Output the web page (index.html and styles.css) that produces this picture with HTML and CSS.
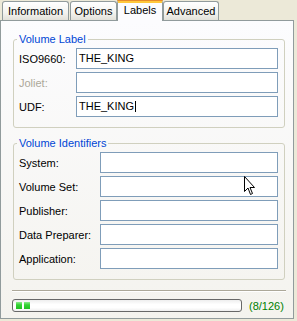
FILE: index.html
```html
<!DOCTYPE html>
<html>
<head>
<meta charset="utf-8">
<link rel="stylesheet" href="styles.css">
</head>
<body>
<div class="window">
  <div class="tabs">
    <div class="tab tab-info">Information</div>
    <div class="tab tab-options">Options</div>
    <div class="tab tab-labels selected">Labels</div>
    <div class="tab tab-adv">Advanced</div>
  </div>
  <div class="panel">
    <fieldset class="group group-label">
      <legend>Volume Label</legend>
      <div class="rows rows-label">
        <span class="lbl">ISO9660:</span><div class="field">THE_KING</div>
        <span class="lbl disabled">Joliet:</span><div class="field"></div>
        <span class="lbl">UDF:</span><div class="field">THE_KING<span class="caret"></span></div>
      </div>
    </fieldset>
    <fieldset class="group group-ids">
      <legend>Volume Identifiers</legend>
      <div class="rows rows-ids">
        <span class="lbl">System:</span><div class="field"></div>
        <span class="lbl">Volume Set:</span><div class="field"></div>
        <span class="lbl">Publisher:</span><div class="field"></div>
        <span class="lbl">Data Preparer:</span><div class="field"></div>
        <span class="lbl">Application:</span><div class="field"></div>
      </div>
    </fieldset>
    <div class="sep"></div>
    <div class="status">
      <div class="progress"><span class="block"></span><span class="block"></span></div>
      <span class="count">(8/126)</span>
    </div>
  </div>
  <svg class="pointer" width="13" height="21" viewBox="0 0 13 21">
    <path d="M0.5 0.5 L0.5 15.5 L4 12 L6.5 18.5 L8.5 17.5 L6 11.5 L10.5 11.5 Z" fill="#fff" stroke="#000" stroke-width="1"/>
  </svg>
</div>
</body>
</html>
```
FILE: styles.css
```css
* { box-sizing: border-box; }
html, body {
  margin: 0;
  padding: 0;
  background: #ECE9D8;
}
.window {
  position: relative;
  width: 297px;
  height: 321px;
  background: #ECE9D8;
  font-family: "Liberation Sans", Arial, sans-serif;
  font-size: 11px;
  color: #000;
}
.tabs {
  display: flex;
  align-items: flex-end;
  height: 21px;
  padding-left: 2px;
  position: relative;
  z-index: 2;
}
.tab {
  height: 19px;
  border: 1px solid #919B9C;
  border-bottom: none;
  border-radius: 3px 3px 0 0;
  background: linear-gradient(to bottom, #FFFFFF 0%, #F3F3EF 60%, #E2E1D9 100%);
  text-align: center;
  line-height: 17px;
  padding-top: 1px;
  margin-bottom: 1px;
}
.tab-info { width: 67px; margin-right: 1px; }
.tab-options { width: 47px; }
.tab-labels { width: 46px; }
.tab-adv { width: 56px; }
.tab.selected {
  height: 21px;
  margin-bottom: 0;
  background: #FCFCFE;
  border-top: 3px solid #FFC83C;
  border-radius: 2px 2px 0 0;
  line-height: 14px;
  padding-top: 0;
  position: relative;
}
.tab.selected::before {
  content: "";
  position: absolute;
  left: -1px;
  right: -1px;
  top: -3px;
  height: 1px;
  background: #E68B2C;
  border-radius: 2px 2px 0 0;
}
.panel {
  margin-top: -1px;
  width: 294px;
  height: 299px;
  border: 1px solid #919B9C;
  background: linear-gradient(to bottom, #FCFCFE 0%, #F4F3EE 100%);
  padding: 12px 7px 0 11px;
  position: relative;
  z-index: 1;
}
.group {
  margin: 0 1px;
  border: 1px solid #D0D0BF;
  border-radius: 3px;
  padding: 2px 6px 10px 5px;
  min-width: 0;
}
.group-ids { margin-top: 9px; }
.group legend {
  color: #0046D5;
  padding: 0 2px;
  margin-left: -2px;
  line-height: 13px;
}
.rows {
  display: grid;
  row-gap: 3px;
  align-items: center;
}
.rows-label { grid-template-columns: 57px 1fr; }
.rows-ids { grid-template-columns: 81px 1fr; }
.lbl { white-space: nowrap; }
.lbl.disabled { color: #ACA899; }
.field {
  height: 21px;
  border: 1px solid #7F9DB9;
  background: #fff;
  padding: 0 2px;
  line-height: 19px;
  display: flex;
  align-items: center;
}
.caret {
  display: inline-block;
  width: 1px;
  height: 11px;
  background: #000;
  margin-left: 1px;
}
.sep {
  margin-top: 10px;
  height: 2px;
  border-top: 1px solid #ACA899;
  border-bottom: 1px solid #FFFFFF;
}
.status {
  margin-top: 7px;
  display: flex;
  align-items: center;
  gap: 7px;
}
.progress {
  width: 230px;
  height: 13px;
  border: 1px solid #686868;
  border-radius: 3px;
  background: linear-gradient(to bottom, #EEEEEE 0%, #FFFFFF 40%, #FFFFFF 70%, #EEEEEE 100%);
  padding: 2px 3px;
  display: flex;
  gap: 2px;
}
.block {
  width: 6px;
  height: 7px;
  background: linear-gradient(to bottom, #8DEB8D 0%, #35D435 40%, #22C022 100%);
}
.count {
  color: #008000;
}
.pointer {
  position: absolute;
  left: 244px;
  top: 176px;
  z-index: 5;
}
```
